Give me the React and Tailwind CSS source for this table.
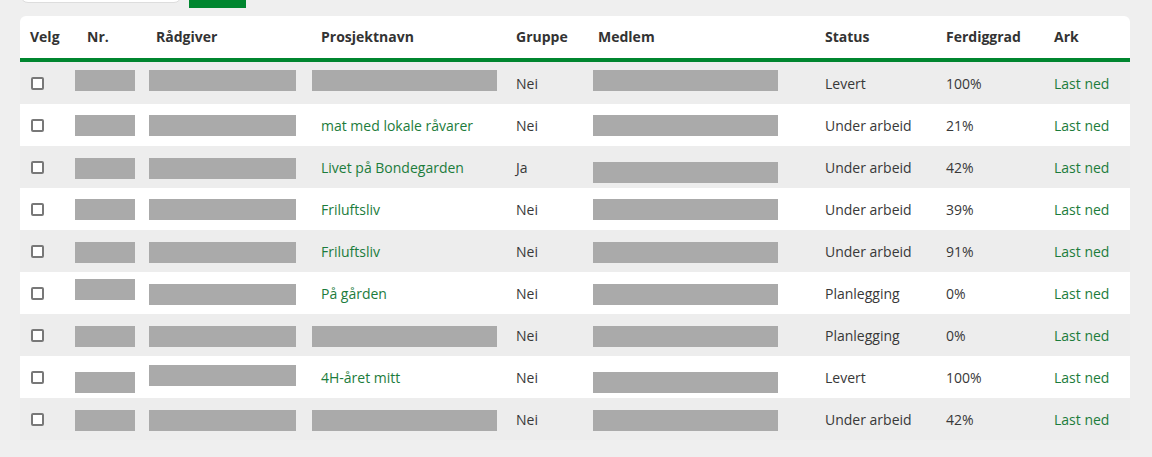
import React from "react";

const cols = "grid grid-cols-[57px_69px_165px_195px_82px_227px_121px_108px_86px]";

const rows = [
  { nr: 8, rad: 8, prosj: { box: 8 }, gruppe: "Nei", med: 8, status: "Levert", pct: "100%" },
  { nr: 11, rad: 11, prosj: { text: "mat med lokale råvarer" }, gruppe: "Nei", med: 11, status: "Under arbeid", pct: "21%" },
  { nr: 12, rad: 12, prosj: { text: "Livet på Bondegarden" }, gruppe: "Ja", med: 16, status: "Under arbeid", pct: "42%" },
  { nr: 11, rad: 11, prosj: { text: "Friluftsliv" }, gruppe: "Nei", med: 11, status: "Under arbeid", pct: "39%" },
  { nr: 12, rad: 12, prosj: { text: "Friluftsliv" }, gruppe: "Nei", med: 12, status: "Under arbeid", pct: "91%" },
  { nr: 7, rad: 12, prosj: { text: "På gården" }, gruppe: "Nei", med: 12, status: "Planlegging", pct: "0%" },
  { nr: 12, rad: 12, prosj: { box: 12 }, gruppe: "Nei", med: 12, status: "Planlegging", pct: "0%" },
  { nr: 16, rad: 9, prosj: { text: "4H-året mitt" }, gruppe: "Nei", med: 16, status: "Levert", pct: "100%" },
  { nr: 12, rad: 12, prosj: { box: 12 }, gruppe: "Nei", med: 12, status: "Under arbeid", pct: "42%" },
];

function Box({ top, left, width }) {
  return (
    <div
      className="h-[21px] bg-[#aaaaaa]"
      style={{ marginTop: top, marginLeft: left, width }}
    />
  );
}

function TextCell({ children, green }) {
  return (
    <div className={`flex items-center pl-[10px] ${green ? "text-[#1c7c3c]" : "text-[#383838]"}`}>
      {children}
    </div>
  );
}

export default function App() {
  return (
    <div
      className="min-h-[457px] bg-[#efefef] pl-[20px] pr-[22px] pb-[17px] text-[14px]"
      style={{ fontFamily: '"Open Sans", "Noto Sans", sans-serif' }}
    >
      <div className="-mt-[33px] flex items-start gap-[7px]">
        <div className="h-[36px] w-[162px] rounded-[8px] border border-[#dddddd] bg-white" />
        <div className="h-[41px] w-[57px] bg-[#00862f]" />
      </div>
      <div className="mt-[8px] overflow-hidden rounded-t-[6px] bg-white">
        <div className={`${cols} h-[46px] border-b-[4px] border-[#00862f] pb-[2px] font-bold text-[#333333]`}>
          {["Velg", "Nr.", "Rådgiver", "Prosjektnavn", "Gruppe", "Medlem", "Status", "Ferdiggrad", "Ark"].map((h) => (
            <div key={h} className="flex items-center pl-[10px]">{h}</div>
          ))}
        </div>
        {rows.map((r, i) => (
          <div
            key={i}
            className={`${cols} h-[42px] ${i % 2 === 0 ? "bg-[#ededed]" : "bg-white"}`}
          >
            <div className="flex items-center pl-[11px]">
              <span className="block h-[13px] w-[13px] rounded-[2px] border-[2px] border-[#787878] bg-white" />
            </div>
            <div><Box top={r.nr} left={-2} width={60} /></div>
            <div><Box top={r.rad} left={3} width={147} /></div>
            {r.prosj.box !== undefined ? (
              <div><Box top={r.prosj.box} left={1} width={185} /></div>
            ) : (
              <TextCell green>{r.prosj.text}</TextCell>
            )}
            <TextCell>{r.gruppe}</TextCell>
            <div><Box top={r.med} left={5} width={185} /></div>
            <TextCell>{r.status}</TextCell>
            <TextCell>{r.pct}</TextCell>
            <TextCell green>Last ned</TextCell>
          </div>
        ))}
      </div>
    </div>
  );
}
